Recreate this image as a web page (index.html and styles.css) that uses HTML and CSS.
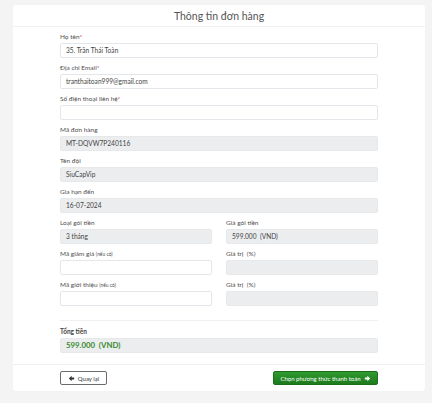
FILE: index.html
```html
<!DOCTYPE html>
<html lang="vi">
<head>
<meta charset="utf-8">
<link rel="stylesheet" href="styles.css">
</head>
<body>
<div class="card">
  <div class="card-header">Thông tin đơn hàng</div>
  <div class="card-body">
    <div class="field">
      <label class="lbl">Họ tên<span class="req">*</span></label>
      <div class="input">35. Trần Thái Toàn</div>
    </div>
    <div class="field">
      <label class="lbl">Địa chỉ Email<span class="req">*</span></label>
      <div class="input">tranthaitoan999@gmail.com</div>
    </div>
    <div class="field">
      <label class="lbl">Số điện thoại liên hệ<span class="req">*</span></label>
      <div class="input"></div>
    </div>
    <div class="field">
      <label class="lbl">Mã đơn hàng</label>
      <div class="input ro">MT-DQVW7P240116</div>
    </div>
    <div class="field">
      <label class="lbl">Tên đội</label>
      <div class="input ro">SiuCapVip</div>
    </div>
    <div class="field">
      <label class="lbl">Gia hạn đến</label>
      <div class="input ro">16-07-2024</div>
    </div>
    <div class="row">
      <div class="field">
        <label class="lbl">Loại gói tiền</label>
        <div class="input ro">3 tháng</div>
      </div>
      <div class="field">
        <label class="lbl">Giá gói tiền</label>
        <div class="input ro">599.000 &nbsp;(VND)</div>
      </div>
    </div>
    <div class="row">
      <div class="field">
        <label class="lbl">Mã giảm giá <small>(nếu có)</small></label>
        <div class="input"></div>
      </div>
      <div class="field">
        <label class="lbl">Giá trị &nbsp;(%)</label>
        <div class="input ro"></div>
      </div>
    </div>
    <div class="row">
      <div class="field">
        <label class="lbl">Mã giới thiệu <small>(nếu có)</small></label>
        <div class="input"></div>
      </div>
      <div class="field">
        <label class="lbl">Giá trị &nbsp;(%)</label>
        <div class="input ro"></div>
      </div>
    </div>
    <hr class="divider">
    <div class="field total">
      <label class="lbl bold">Tổng tiền</label>
      <div class="input ro total-val">599.000 &nbsp;(VND)</div>
    </div>
  </div>
  <div class="card-footer">
    <button class="btn btn-back">
      <svg class="ico" viewBox="0 0 10 10"><path d="M5.2 1.2 L1.2 5 L5.2 8.8 L5.2 6.3 L8.8 6.3 L8.8 3.7 L5.2 3.7 Z" fill="#333"/></svg>
      <span>Quay lại</span>
    </button>
    <button class="btn btn-next">
      <span>Chọn phương thức thanh toán</span>
      <svg class="ico" viewBox="0 0 10 10"><path d="M4.8 1.2 L8.8 5 L4.8 8.8 L4.8 6.3 L1.2 6.3 L1.2 3.7 L4.8 3.7 Z" fill="#fff"/></svg>
    </button>
  </div>
</div>
</body>
</html>
```

FILE: styles.css
```css
* { box-sizing: border-box; }
html, body { margin: 0; padding: 0; }
body {
  background: #f4f4f4;
  font-family: Lato, "Noto Sans", sans-serif;
  color: #555;
  padding: 5px 7px 10px 13px;
}
.card {
  background: #fff;
  border-radius: 3px;
  width: 412px;
  box-shadow: 0 0 1px rgba(0,0,0,0.04);
}
.card-header {
  height: 22px;
  line-height: 22px;
  text-align: center;
  font-size: 10.5px;
  color: #555;
  border-bottom: 1px solid #eef0f2;
}
.card-body {
  padding: 6px 47px 5px 47px;
  display: flex;
  flex-direction: column;
}
.field {
  display: flex;
  flex-direction: column;
  margin-bottom: 6px;
}
.lbl {
  font-size: 6.5px;
  line-height: 8px;
  height: 8px;
  margin-bottom: 2px;
  color: #4f4f4f;
  white-space: nowrap;
}
.lbl small { font-size: 4.9px; }
.lbl.bold { font-weight: 700; color: #444; }
.req { color: #e03030; }
.input {
  height: 15px;
  border: 1px solid #e3e7ec;
  border-radius: 2px;
  padding: 0 5px;
  font-size: 6.6px;
  line-height: 13px;
  color: #444;
  background: #fff;
  white-space: nowrap;
}
.input.ro {
  background: #ebedef;
  border-color: #e6e8ea;
}
.row {
  display: grid;
  grid-template-columns: 1fr 1fr;
  column-gap: 14px;
}
.divider {
  border: 0;
  border-top: 1px solid #f0f1f3;
  margin: 8px 0 7px 0;
  width: 100%;
}
.total { margin-bottom: 6px; }
.total-val {
  color: #3a8a2e;
  font-weight: 700;
  font-size: 7.8px;
}
.card-footer {
  border-top: 1px solid #eef0f2;
  display: flex;
  justify-content: space-between;
  align-items: center;
  padding: 0 47px;
  height: 27px;
}
.btn {
  font-family: Lato, "Noto Sans", sans-serif;
  display: flex;
  align-items: center;
  justify-content: center;
  gap: 3px;
  height: 14px;
  padding: 0 4px;
  font-size: 6px;
  border-radius: 2px;
  white-space: nowrap;
  cursor: pointer;
}
.btn-back {
  width: 47px;
  background: #fff;
  border: 1px solid #6b6b6b;
  color: #333;
}
.btn-next {
  width: 105px;
  background: linear-gradient(#2f9a2f, #1d7a1d);
  border: 1px solid #1b6e1b;
  color: #fff;
}
.ico { width: 7px; height: 7px; flex: none; }
```
